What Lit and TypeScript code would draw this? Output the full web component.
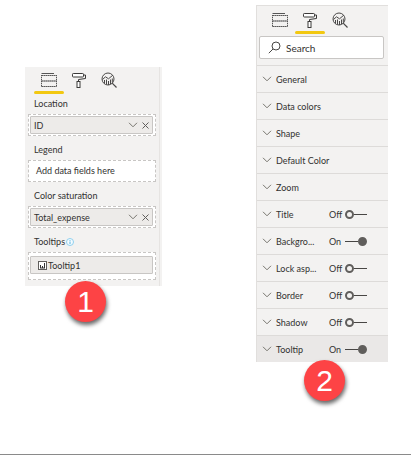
import { LitElement, html, svg, css, nothing } from "lit";
import { customElement, property, state } from "lit/decorators.js";
import { classMap } from "lit/directives/class-map.js";

const chevron = html`<svg width="10" height="6" viewBox="0 0 10 6" aria-hidden="true">
  <path d="M1 0.8 L5 4.8 L9 0.8" fill="none" stroke="#77756f" stroke-width="1" />
</svg>`;

const cross = html`<svg width="7" height="7" viewBox="0 0 7 7" aria-hidden="true">
  <path d="M0.5 0.5 L6.5 6.5 M6.5 0.5 L0.5 6.5" fill="none" stroke="#605e5c" stroke-width="1" />
</svg>`;

const tabIcons = {
  Fields: svg`<path d="M0.5 1.5 H13" stroke="#555" fill="none"/>
    <path d="M0.5 3.5 H15.5 M0.5 14.5 H15.5" stroke="#333" stroke-dasharray="1.3 0.7" fill="none"/>
    <path d="M0.5 8.5 H15.5 M0.5 9.5 H15.5" stroke="#666" stroke-dasharray="1.2 0.8" fill="none"/>
    <path d="M0.5 3 V15 M15.5 3 V15" stroke="#555" stroke-dasharray="1.3 0.7" fill="none"/>`,
  Format: svg`<rect x="1.5" y="1.5" width="11" height="3.5" rx="0.8" stroke="#3b3a39" fill="#fff"/>
    <path d="M12.5 3 H14.5 V6.5 L7.5 7.5 V9.5" stroke="#3b3a39" fill="none"/>
    <rect x="6" y="9.5" width="3" height="6" stroke="#3b3a39" fill="#fff"/>`,
  Analytics: svg`<circle cx="7" cy="7" r="6" stroke="#4a4948" fill="none"/>
    <path d="M1.5 7.5 L4.5 4.8 L7.5 6.8 L11.8 3.2" stroke="#4a4948" fill="none"/>
    <path d="M3.5 8 V11.5 M5.5 7.5 V12.5 M7.5 9 V13 M9.5 7.5 V12 M11.3 6.5 V10.5" stroke="#4a4948" fill="none"/>
    <path d="M11.2 11.2 L15.5 15.5" stroke="#4a4948" stroke-width="1.2" fill="none"/>`,
};
type TabName = keyof typeof tabIcons;

@customElement("pane-tabs")
class PaneTabs extends LitElement {
  static styles = css`
    :host { display: block; }
    .tabs { display: flex; }
    .item { display: flex; flex-direction: column; width: 30px; }
    .tab {
      height: 19px;
      padding: 0 0 3px;
      border: 0;
      background: none;
      display: grid;
      place-items: center;
      box-sizing: border-box;
    }
    .bar { height: 3px; border-radius: 2px; }
    .active .bar { background: #f2c811; }
  `;
  @property() active: TabName = "Fields";
  render() {
    return html`<div class="tabs">
      ${(Object.keys(tabIcons) as TabName[]).map(
        (name) => html`<div class=${classMap({ item: true, active: name === this.active })}>
          <button class="tab" aria-label=${name} @click=${() => (this.active = name)}>
            <svg width="16" height="16" viewBox="0 0 16 16">${tabIcons[name]}</svg>
          </button>
          <div class="bar"></div>
        </div>`
      )}
    </div>`;
  }
}

@customElement("field-well")
class FieldWell extends LitElement {
  static styles = css`
    :host { display: block; }
    .label { display: flex; align-items: center; gap: 1px; padding-left: 6px; height: 12px; line-height: 12px; margin-bottom: 4px; }
    .well { border: 1px dashed #c8c6c4; background: #fff; min-height: 22px; box-sizing: border-box; padding: 1px 2px 1px 1px; }
    .roomy { padding: 3px 2px 5px 1px; }
    .chip {
      display: flex;
      align-items: center;
      height: 18px;
      box-sizing: border-box;
      border: 1px solid #c8c6c4;
      border-radius: 1px;
      background: #edebe9;
      padding: 0 3px;
    }
    .name { flex: 1; }
    .roomy .chip { padding-left: 7px; gap: 1px; }
    .action { border: 0; background: none; padding: 0; display: flex; margin-left: 4px; }
    .empty { padding-left: 6px; line-height: 18px; }
  `;
  @property() label = "";
  @property() field = "";
  @property({ type: Boolean }) measure = false;
  render() {
    return html`<div class="label">
        ${this.label}
        ${this.measure
          ? html`<svg width="8" height="8" viewBox="0 0 8 8" aria-hidden="true">
              <circle cx="4" cy="4" r="3.5" fill="#f4fbff" stroke="#8fd0ee" />
              <path d="M4 3.5 V6 M4 2 V2.8" stroke="#5bb4e0" />
            </svg>`
          : nothing}
      </div>
      <div class=${classMap({ well: true, roomy: this.measure })}>
        ${this.field
          ? html`<div class="chip">
              ${this.measure
                ? html`<svg width="9" height="9" viewBox="0 0 9 9" aria-hidden="true">
                    <rect x="0.5" y="0.5" width="8" height="8" fill="#fff" stroke="#605e5c" />
                    <path d="M2.5 4 V7 M4.5 5 V7 M6.5 2 V7 M2 7 H7" stroke="#333" fill="none" />
                  </svg>`
                : nothing}
              <span class="name">${this.field}</span>
              ${this.measure
                ? nothing
                : html`<button class="action" aria-label="Options">${chevron}</button>
                    <button class="action" aria-label="Remove">${cross}</button>`}
            </div>`
          : html`<div class="empty">Add data fields here</div>`}
      </div>`;
  }
}

@customElement("format-row")
class FormatRow extends LitElement {
  static styles = css`
    :host { display: block; }
    .row {
      display: flex;
      align-items: center;
      height: 27px;
      box-sizing: border-box;
      border-top: 1px solid #dddbd9;
      padding: 0 21px 0 5px;
    }
    .current { background: #eae8e7; }
    .title {
      flex: 1;
      display: flex;
      align-items: center;
      gap: 4px;
      border: 0;
      padding: 0;
      background: none;
      font: inherit;
      color: inherit;
      text-align: left;
    }
    .switch { display: flex; align-items: center; }
    .word { width: 16px; }
    .toggle {
      appearance: none;
      width: 22px;
      height: 9px;
      margin: 0;
      display: flex;
      align-items: center;
    }
    .toggle::before {
      content: "";
      box-sizing: border-box;
      width: 9px;
      height: 9px;
      border: 2px solid #605e5c;
      border-radius: 50%;
    }
    .toggle::after { content: ""; flex: 1; height: 1px; background: #484644; }
    .toggle:checked { flex-direction: row-reverse; }
    .toggle:checked::before { background: #605e5c; }
  `;
  @property() label = "";
  @property() value = "";
  @property({ type: Boolean }) current = false;
  render() {
    return html`<div class=${classMap({ row: true, current: this.current })}>
      <button class="title">${chevron}<span>${this.label}</span></button>
      ${this.value
        ? html`<label class="switch">
            <span class="word">${this.value}</span>
            <input class="toggle" type="checkbox" role="switch" aria-label=${this.label}
              .checked=${this.value === "On"}
              @change=${(e: Event) => (this.value = (e.target as HTMLInputElement).checked ? "On" : "Off")} />
          </label>`
        : nothing}
    </div>`;
  }
}

@customElement("app-root")
class AppRoot extends LitElement {
  static styles = css`
    :host {
      display: flex;
      flex-direction: column;
      min-height: 100vh;
      box-sizing: border-box;
      background: #fff;
      border-bottom: 1px solid #8a8a8a;
      color: #323130;
      font: 9px "Lato", "Open Sans", sans-serif;
    }
    .panes {
      display: grid;
      grid-template-columns: minmax(0, 137fr) minmax(0, 132fr);
      align-items: start;
      gap: 94px;
      padding: 5px 23px 54px 25px;
    }
    .pane { position: relative; background: #f3f2f1; }
    .fields { margin-top: 62px; padding: 5px 6px 6px 3px; }
    .fields::after {
      content: "";
      position: absolute;
      inset: 0 2px 0 auto;
      width: 1px;
      background: #e6e4e2;
    }
    .fields .tabs { padding-left: 6px; }
    .wells { display: flex; flex-direction: column; gap: 8px; padding-top: 4px; }
    .format { border-top: 1px solid #e1dfdd; border-left: 1px solid #e1dfdd; padding-top: 6px; }
    .format .tabs { padding-left: 8px; }
    .search {
      display: flex;
      align-items: center;
      gap: 5px;
      height: 23px;
      box-sizing: border-box;
      margin: 2px 4px 6px 2px;
      padding-left: 8px;
      border: 1px solid #c8c6c4;
      border-radius: 2px;
      background: #fff;
    }
    .query { flex: 1; width: 0; min-width: 0; border: 0; padding: 0; outline: 0; background: none; font: inherit; font-size: 10px; color: inherit; }
    .query::placeholder { color: #323130; opacity: 1; }
    .badge {
      position: absolute;
      z-index: 1;
      width: 41px;
      height: 41px;
      border-radius: 50%;
      background: #fd4345;
      box-shadow: 1px 3px 4px rgba(0, 0, 0, 0.6);
      color: #fff;
      font: 30px/41px "Liberation Sans", Arial, sans-serif;
      text-align: center;
    }
    .one { left: 40px; bottom: -36px; }
    .two { left: 47px; bottom: -39px; }
  `;

  @state() private options: [string, string][] = [
    ["General", ""],
    ["Data colors", ""],
    ["Shape", ""],
    ["Default Color", ""],
    ["Zoom", ""],
    ["Title", "Off"],
    ["Backgro...", "On"],
    ["Lock asp...", "Off"],
    ["Border", "Off"],
    ["Shadow", "Off"],
    ["Tooltip", "On"],
  ];

  render() {
    return html`<main class="panes">
      <section class="pane fields" aria-label="Fields">
        <pane-tabs class="tabs" active="Fields"></pane-tabs>
        <div class="wells">
          <field-well label="Location" field="ID"></field-well>
          <field-well label="Legend"></field-well>
          <field-well label="Color saturation" field="Total_expense"></field-well>
          <field-well label="Tooltips" field="Tooltip1" measure></field-well>
        </div>
        <div class="badge one">1</div>
      </section>
      <section class="pane format" aria-label="Format">
        <pane-tabs class="tabs" active="Format"></pane-tabs>
        <label class="search">
          <svg width="13" height="13" viewBox="0 0 13 13" aria-hidden="true">
            <circle cx="8" cy="5" r="4" fill="none" stroke="#484644" />
            <path d="M5 8 L0.8 12.2" stroke="#484644" />
          </svg>
          <input class="query" type="text" placeholder="Search" aria-label="Search" />
        </label>
        ${this.options.map(
          ([label, value]) =>
            html`<format-row label=${label} value=${value} ?current=${label === "Tooltip"}></format-row>`
        )}
        <div class="badge two">2</div>
      </section>
    </main>`;
  }
}
